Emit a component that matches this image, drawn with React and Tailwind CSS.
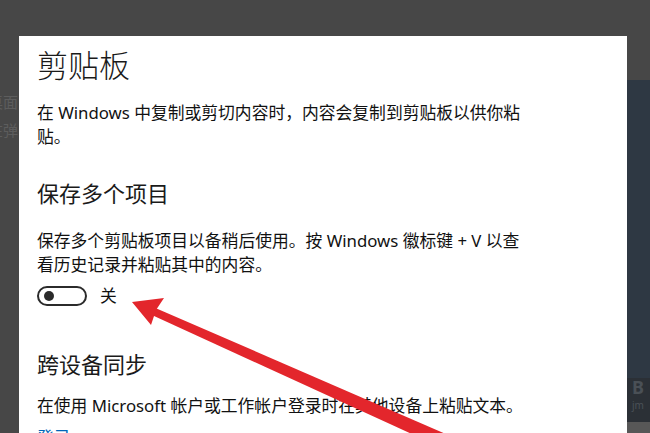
export default function App() {
  const font = "font-['Noto_Sans','Noto_Sans_CJK_SC',sans-serif]";
  return (
    <div className={`relative w-[650px] h-[433px] overflow-hidden bg-[#474747] flex ${font}`}>
      {/* left strip */}
      <div className="w-[19px] shrink-0 overflow-hidden flex flex-col text-[15px] text-[#5d5d5d] leading-[20px]">
        <div className="mt-[92px] -ml-[12px] whitespace-nowrap">桌面</div>
        <div className="mt-[8px] -ml-[12px] whitespace-nowrap">在弹</div>
      </div>

      {/* dialog */}
      <div className="w-[608px] shrink-0 mt-[36px] bg-white px-[18px] pt-[9px] text-[#111]">
        <div className="text-[31px] leading-[40px] font-light text-[#1a1a1a]">剪贴板</div>
        <div className="mt-[16px] text-[16.8px] leading-[23.5px]">
          <div className="whitespace-nowrap">在 Windows 中复制或剪切内容时，内容会复制到剪贴板以供你粘</div>
          <div>贴。</div>
        </div>

        <div className="mt-[30px] text-[22px] leading-[30px] text-[#1a1a1a]">保存多个项目</div>
        <div className="mt-[21px] text-[16.8px] leading-[23.5px]">
          <div className="whitespace-nowrap">保存多个剪贴板项目以备稍后使用。按 Windows 徽标键 + V 以查</div>
          <div>看历史记录并粘贴其中的内容。</div>
        </div>

        <div className="mt-[10px] flex items-center gap-[13px]">
          <div className="w-[50px] h-[20px] rounded-full border-2 border-[#2b2b2b] flex items-center pl-[5px]">
            <div className="w-[10px] h-[10px] rounded-full bg-[#2b2b2b]" />
          </div>
          <span className="text-[16.8px] leading-[20px]">关</span>
        </div>

        <div className="mt-[43px] text-[22px] leading-[30px] text-[#1a1a1a]">跨设备同步</div>
        <div className="mt-[15px] text-[16.8px] leading-[23.5px] whitespace-nowrap">
          在使用 Microsoft 帐户或工作帐户登录时在其他设备上粘贴文本。
        </div>
        <div className="mt-[8px] text-[16.8px] leading-[23.5px] text-[#0067b8]">登录</div>
      </div>

      {/* right strip */}
      <div className="flex-1 flex flex-col">
        <div className="h-[80px] bg-[#474747]" />
        <div className="flex-1 bg-[#2e3843]" />
        <div className="h-[44px] bg-[#2b3036] flex flex-col pl-[5px] text-[#4a5056]">
          <div className="text-[18px] leading-[18px] font-bold">B</div>
          <div className="mt-[3px] text-[10px] leading-[12px]">jm</div>
        </div>
        <div className="h-[11px] bg-[#575757]" />
      </div>

      {/* red annotation arrow */}
      <svg className="absolute left-0 top-0 pointer-events-none" width="650" height="433" viewBox="0 0 650 433">
        <polygon
          points="149.6,305.4 455,438 449,451 146.4,312.6"
          fill="#e3262c"
        />
        <polygon points="132,302 164,298 156,310 151,325" fill="#e3262c" />
      </svg>
    </div>
  );
}
